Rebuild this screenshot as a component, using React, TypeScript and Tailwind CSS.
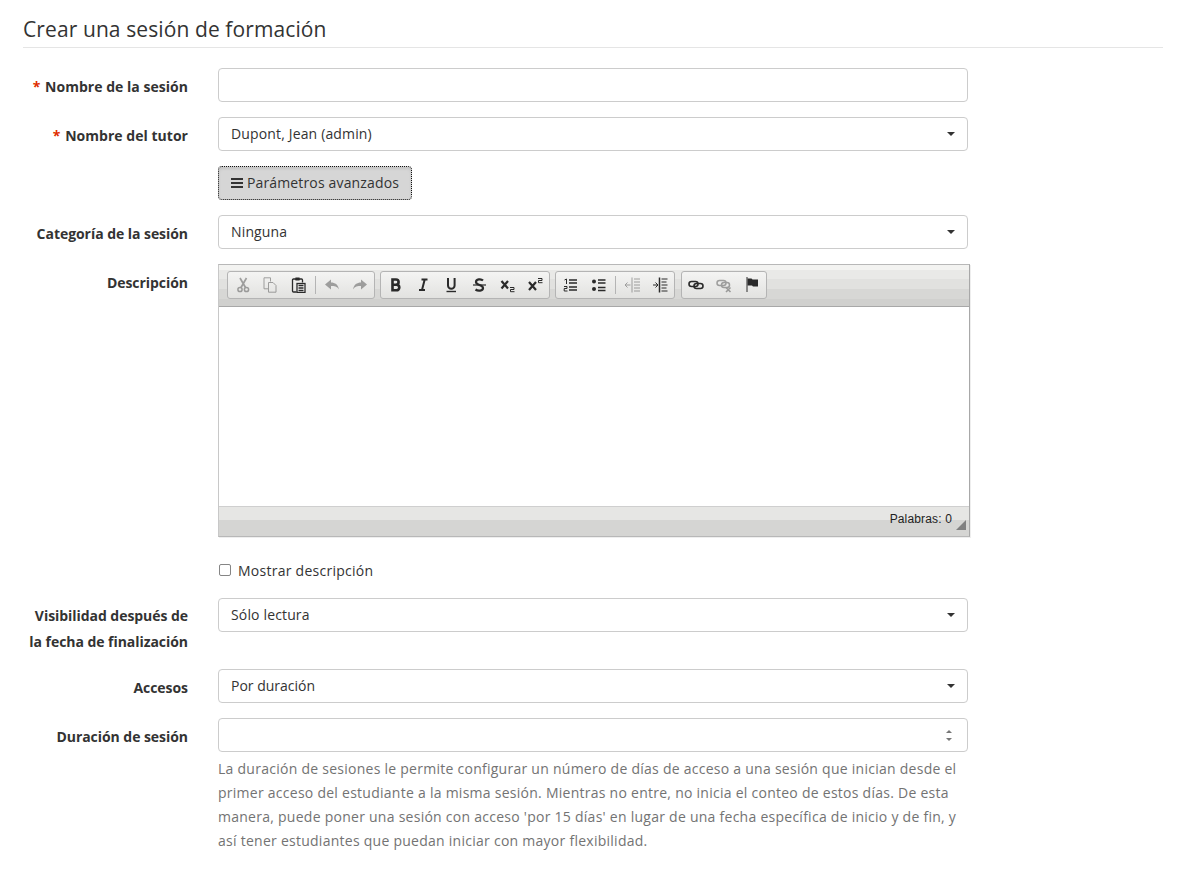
import React from "react";

const I = ({ children, dim }: { children: React.ReactNode; dim?: boolean }) => (
  <span className={`flex h-[26px] w-[28px] items-center justify-center ${dim ? "opacity-40" : ""}`}>
    <svg width="16" height="16" viewBox="0 0 16 16" fill="none" stroke="#2a2a2a" strokeWidth="1.3">{children}</svg>
  </span>
);
const Sep = () => <span className="mx-[2.5px] h-[18px] w-px bg-[#b4b4b4]" />;
const Group = ({ children, cls }: { children: React.ReactNode; cls?: string }) => (
  <div className={`flex h-[28px] items-center rounded-[3px] border border-[#b4b4b4] bg-gradient-to-b from-[#f4f4f3] to-[#e2e2e0] ${cls ?? ""}`}>{children}</div>
);

const Label = ({ children, req, top }: { children: React.ReactNode; req?: boolean; top?: string }) => (
  <div className={`w-[188px] shrink-0 pl-[8px] text-right font-bold leading-[26px] text-[#333333] ${req ? "tracking-[0.03px]" : "tracking-[-0.05px]"} ${top ?? "pt-[6px]"}`}>
    {req && <span className="mr-[1px] text-[#e02d00]">* </span>}
    {children}
  </div>
);

const Select = ({ value, track }: { value: string; track?: string }) => (
  <div className="flex h-[34px] w-[750px] items-center justify-between rounded-[4px] border border-[#cccccc] bg-white px-[12px] text-[#333333]">
    <span className={`pb-[2px] ${track ?? "tracking-[0.15px]"}`}>{value}</span>
    <span className="h-0 w-0 border-x-[4px] border-t-[4px] border-x-transparent border-t-[#333333]" />
  </div>
);

const Row = ({ label, req, children, cls, top }: { label: React.ReactNode; req?: boolean; children: React.ReactNode; cls?: string; top?: string }) => (
  <div className={`flex ${cls ?? "mb-[15px]"}`}>
    <Label req={req} top={top}>{label}</Label>
    <div className="ml-[30px]">{children}</div>
  </div>
);

export default function App() {
  return (
    <div className="min-h-[876px] bg-white pl-[23px] pr-[21px] pt-[15px] text-[14px] text-[#333333] [font-family:'Open_Sans',sans-serif]">
      <h1 className="border-b border-[#e5e5e5] pb-[3px] text-[21px] font-normal leading-[29px] tracking-[0.1px] text-[#333333]">
        Crear una sesión de formación
      </h1>
      <div className="-ml-[23px] mt-[20px]">
        <Row label="Nombre de la sesión" req>
          <div className="h-[34px] w-[750px] rounded-[4px] border border-[#cccccc] bg-white" />
        </Row>
        <Row label="Nombre del tutor" req>
          <Select value="Dupont, Jean (admin)" />
        </Row>
        <div className="mb-[15px] ml-[218px]">
          <button className="flex h-[34px] w-[194px] items-center justify-center gap-[4px] rounded-[4px] border border-dotted border-[#111111] bg-[#d6d6d6] pb-[2px] tracking-[0.15px] text-[#333333] shadow-[inset_0_2px_3px_rgba(0,0,0,0.08)] [font-family:'Open_Sans',sans-serif]">
            <svg width="12" height="12" viewBox="0 0 12 12" fill="#333" className="mt-[2px]">
              <rect x="0" y="1" width="12" height="2" />
              <rect x="0" y="5" width="12" height="2" />
              <rect x="0" y="9" width="12" height="2" />
            </svg>
            Parámetros avanzados
          </button>
        </div>
        <Row label="Categoría de la sesión">
          <Select value="Ninguna" />
        </Row>
        <Row label="Descripción" cls="mb-[21px]">
          <div className="h-[273px] w-[752px] border border-[#b8b8b8] border-l-[#c8c8c8] border-r-[#a8a8a8] bg-white shadow-[1px_1px_0_#eeeeee]">
            <div className="flex h-[42px] items-start gap-[5px] border-b border-[#a8a8a8] bg-[linear-gradient(#f3f3f1_0,#f3f3f1_5px,#e9e9e7_5px,#e9e9e7_14px,#e1e1df_14px,#e1e1df_24px,#d7d7d5_24px,#d7d7d5_34px,#d0d0ce_34px)] pl-[8px] pt-[6px]">
              <Group>
                <I dim>
                  <circle cx="6" cy="12.5" r="2.1" strokeWidth="1.5" />
                  <circle cx="12.5" cy="12.5" r="2.1" strokeWidth="1.5" />
                  <path d="M7 10.5 12.5 1M11.5 10.5 6 1" strokeWidth="1.7" />
                </I>
                <I dim>
                  <path d="M8.5 4.5V.8H2v11h4" strokeWidth="1" />
                  <path d="M6.5 5.5h4.5l3 3v6.7H6.5z" strokeWidth="1" />
                </I>
                <I>
                  <path d="M5 2H3.5a1 1 0 0 0-1 1v11a1 1 0 0 0 1 1h3M10 2h1.5a1 1 0 0 1 1 1v2.5" />
                  <rect x="5" y="0.5" width="5" height="3" rx="1" fill="#2a2a2a" stroke="none" />
                  <rect x="7" y="6.5" width="8" height="9" fill="#f2f2f2" />
                  <path d="M8.5 8.5h5M8.5 11h5M8.5 13.5h5" />
                </I>
                <Sep />
                <I dim><path d="M1 7.5 7 2.5v3c4 0 7 2 8 6.8-2-2.8-4.5-3.3-8-3.3v3.5z" fill="#2a2a2a" stroke="none" /></I>
                <I dim><path d="M15 7.5 9 2.5v3c-4 0-7 2-8 6.8 2-2.8 4.5-3.3 8-3.3v3.5z" fill="#2a2a2a" stroke="none" /></I>
              </Group>
              <Group>
                <I><path d="M5.5 2.5h3.5a2.5 2.5 0 0 1 0 5.2H5.5zM5.5 7.7h4a2.8 2.8 0 0 1 0 5.6h-4z" strokeWidth="2.6" /></I>
                <I><path d="M6.5 2.5h6M4 13h6M9.7 2.5 7 13" strokeWidth="2" /></I>
                <I><path d="M5 1v7.5a3.3 3.3 0 0 0 6.6 0V1" strokeWidth="2" /><path d="M3.5 14.5h9.5" strokeWidth="1.4" /></I>
                <I><path d="M12 3.5C10 1.5 5 2 5 5c0 3.5 7 2.5 7 6 0 3-5 3.3-7.5 1.5" strokeWidth="2.2" /><path d="M2 8h13" strokeWidth="1.2" /></I>
                <I><path d="M2.5 4l6.5 7.5M9 4l-6.5 7.5" strokeWidth="2.2" /><path d="M11 10.5h4v2h-3.5v2.2h4" strokeWidth="1" /></I>
                <I><path d="M2 5l7 8M9 5l-7 8" strokeWidth="2.2" /><path d="M11 1.5h4v2h-3.5v2.2h4" strokeWidth="1" /></I>
              </Group>
              <Group>
                <I>
                  <path d="M2.5 3 4.5 2v5" strokeWidth="1" />
                  <path d="M2 9.5h3v2H2.2v2.5H5.5" strokeWidth="1" />
                  <path d="M7 3h8M7 6h8M7 10h8M7 13h8" strokeWidth="1.3" />
                </I>
                <I>
                  <circle cx="4" cy="4.5" r="2" fill="#2a2a2a" stroke="none" />
                  <circle cx="4" cy="12" r="2" fill="#2a2a2a" stroke="none" />
                  <path d="M8 3h7.5M8 6h7.5M8 10.5h7.5M8 13.5h7.5" strokeWidth="1.3" />
                </I>
                <Sep />
                <I dim>
                  <path d="M8 .5v15" strokeWidth="1" />
                  <path d="M10 2h6M10 5h6M10 8h6M10 11h6M10 14h6M1 8h5.5M3.5 5.5 1 8l2.5 2.5" strokeWidth="1" />
                </I>
                <I>
                  <path d="M7.5.5v15" strokeWidth="1.5" />
                  <path d="M9.5 2h6M9.5 5h5M9.5 8h6M9.5 11h5M9.5 14h6M1 8h5M3.5 5.5 6 8l-2.5 2.5" strokeWidth="1" />
                </I>
              </Group>
              <Group cls="ml-[1px]">
                <I>
                  <rect x="1" y="4.5" width="9" height="5" rx="2.5" strokeWidth="1.6" />
                  <rect x="6" y="6.5" width="9" height="5" rx="2.5" strokeWidth="1.6" />
                </I>
                <I dim>
                  <rect x="1" y="3.5" width="9" height="5" rx="2.5" strokeWidth="1.5" />
                  <rect x="5.5" y="5.5" width="8" height="5" rx="2.5" strokeWidth="1.5" />
                  <path d="M10 10.5l4.5 4.5M14.5 10.5 10 15" strokeWidth="1.6" />
                </I>
                <I>
                  <path d="M3 0v15" strokeWidth="1" />
                  <path d="M3.5 1.5h4l1 1h5.5v7h-5l-1-1H3.5z" fill="#2a2a2a" stroke="none" />
                </I>
              </Group>
            </div>
            <div className="h-[200px] border-b border-[#cfcfcf] bg-white" />
            <div className="relative h-[29px] bg-[linear-gradient(#e6e6e4_0,#e6e6e4_13px,#d5d5d3_13px)] pr-[17px] pt-[4px] text-right text-[12px] leading-[16px] tracking-[0.15px] text-[#222222] [font-family:'Liberation_Sans',sans-serif]">
              Palabras: 0
              <span className="absolute bottom-[6px] right-[3px] h-0 w-0 border-b-[10px] border-l-[10px] border-b-[#808080] border-l-transparent" />
            </div>
          </div>
        </Row>
        <label className="mb-[16px] ml-[219px] flex h-[24px] items-center gap-[7px] tracking-[0.26px] text-[#333333]">
          <span className="-mt-[1px] h-[12px] w-[12px] rounded-[2px] border border-[#858585] bg-white" />
          Mostrar descripción
        </label>
        <Row label={<>Visibilidad después de<br />la fecha de finalización</>} cls="mb-[3px]" top="pt-[5px]">
          <Select value="Sólo lectura" />
          <div className="h-[34px]" />
        </Row>
        <Row label="Accesos">
          <Select value="Por duración" track="tracking-normal" />
        </Row>
        <Row label="Duración de sesión" cls="">
          <div className="relative flex h-[34px] w-[750px] items-center rounded-[4px] border border-[#cccccc] bg-white">
            <span className="absolute right-[15px] flex flex-col gap-[5px]">
              <span className="h-0 w-0 border-x-[3px] border-b-[3px] border-x-transparent border-b-[#777777]" />
              <span className="h-0 w-0 border-x-[3px] border-t-[3px] border-x-transparent border-t-[#777777]" />
            </span>
          </div>
          <p className="mt-[5px] w-[750px] leading-[24px] tracking-[0.26px] text-[#737373]">
            La duración de sesiones le permite configurar un número de días de acceso a una sesión que inician desde el primer acceso del estudiante a la misma sesión. Mientras no entre, no inicia el conteo de estos días. De esta manera, puede poner una sesión con acceso 'por 15 días' en lugar de una fecha específica de inicio y de fin, y así tener estudiantes que puedan iniciar con mayor flexibilidad.
          </p>
        </Row>
      </div>
    </div>
  );
}
